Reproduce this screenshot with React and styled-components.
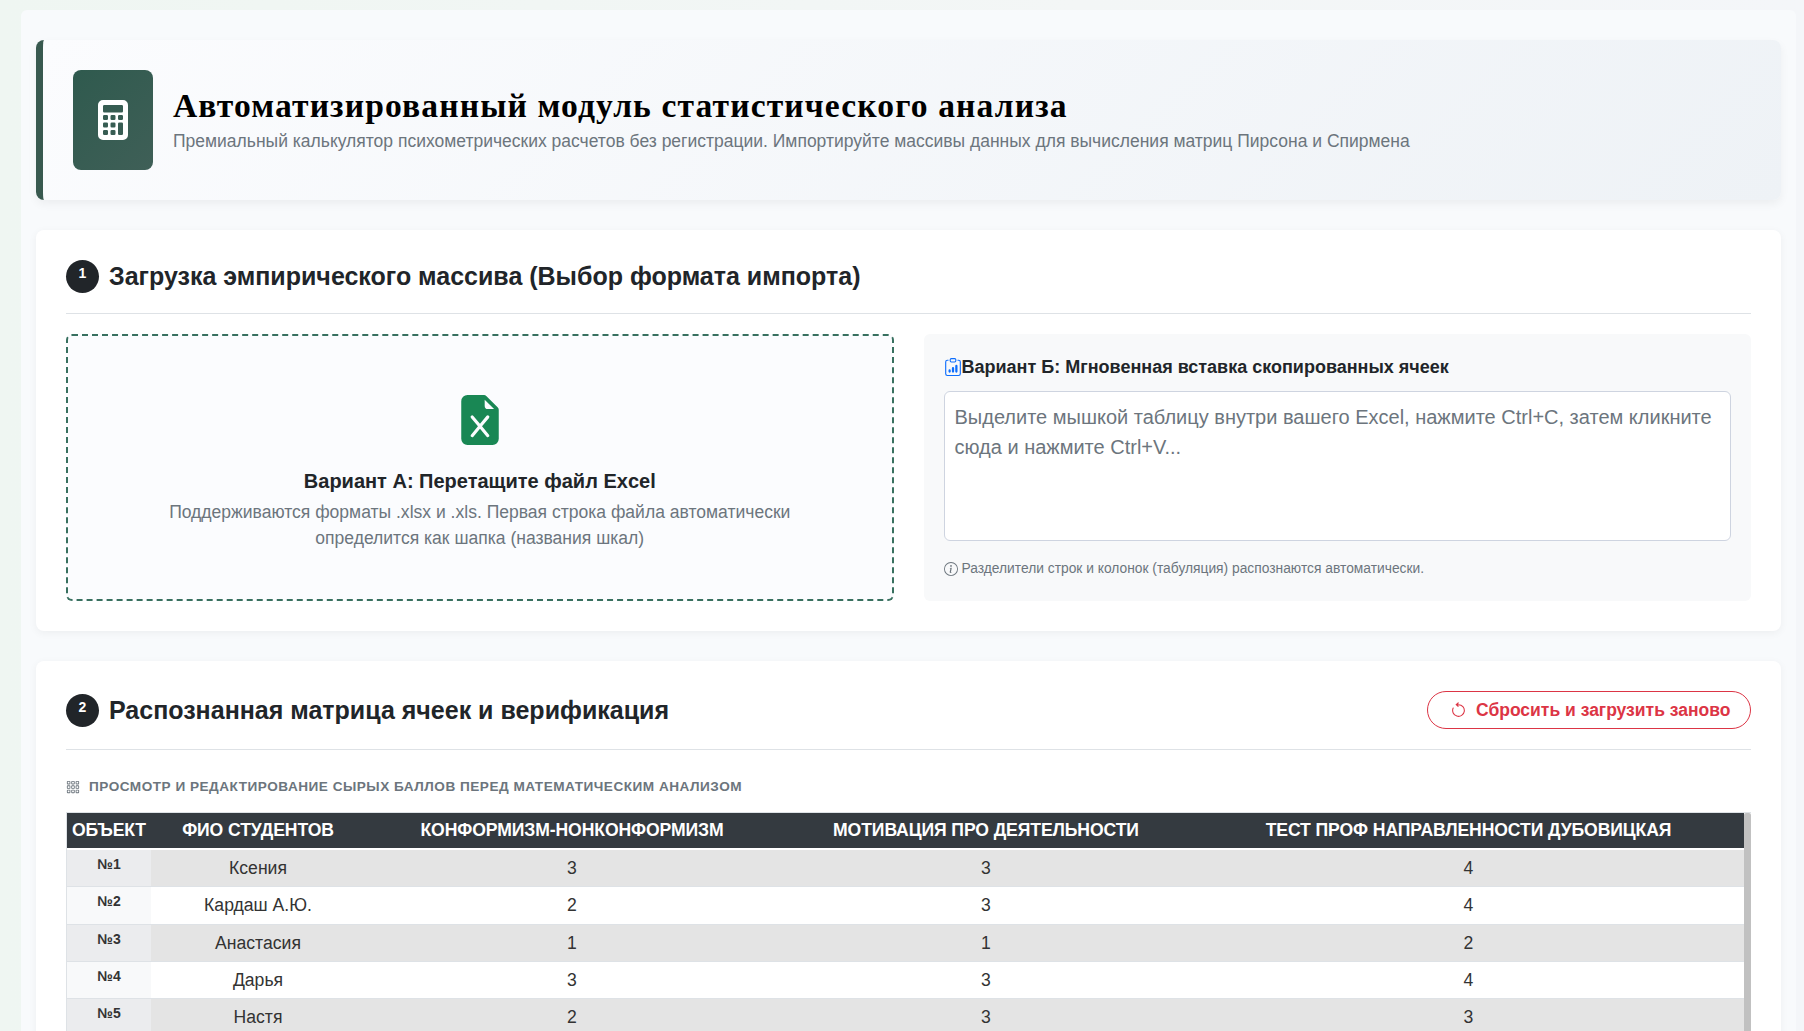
import React from 'react';
import styled, { createGlobalStyle } from 'styled-components';
import {
  BsCalculatorFill,
  BsFileEarmarkExcelFill,
  BsClipboardData,
  BsInfoCircle,
  BsArrowCounterclockwise,
  BsGrid3X3Gap,
} from 'react-icons/bs';

const rows = [
  ['Ксения', 3, 3, 4],
  ['Кардаш А.Ю.', 2, 3, 4],
  ['Анастасия', 1, 1, 2],
  ['Дарья', 3, 3, 4],
  ['Настя', 2, 3, 3],
];

const App = () => {
  return (
    <Page>
      <GlobalStyle />
      <Shell>
        <Hero>
          <HeroIcon><BsCalculatorFill size={40} /></HeroIcon>
          <div>
            <HeroTitle>Автоматизированный модуль статистического анализа</HeroTitle>
            <HeroText>
              Премиальный калькулятор психометрических расчетов без регистрации. Импортируйте массивы данных для вычисления матриц Пирсона и Спирмена
            </HeroText>
          </div>
        </Hero>

        <Card>
          <CardHead>
            <HeadTitle>
              <StepBadge>1</StepBadge>
              <CardTitle $raised>Загрузка эмпирического массива (Выбор формата импорта)</CardTitle>
            </HeadTitle>
          </CardHead>
          <ImportGrid>
            <DropZone>
              <BsFileEarmarkExcelFill size={50} color="#198754" />
              <DropTitle>Вариант А: Перетащите файл Excel</DropTitle>
              <DropText>
                Поддерживаются форматы .xlsx и .xls. Первая строка файла автоматически определится как шапка (названия шкал)
              </DropText>
            </DropZone>
            <PastePanel>
              <PasteTitle>
                <BsClipboardData size={18} color="#0d6efd" />
                Вариант Б: Мгновенная вставка скопированных ячеек
              </PasteTitle>
              <PasteArea
                readOnly
                placeholder="Выделите мышкой таблицу внутри вашего Excel, нажмите Ctrl+C, затем кликните сюда и нажмите Ctrl+V..."
              />
              <Hint>
                <BsInfoCircle size={14} />
                Разделители строк и колонок (табуляция) распознаются автоматически.
              </Hint>
            </PastePanel>
          </ImportGrid>
        </Card>

        <Card>
          <CardHead $compact>
            <HeadTitle>
              <StepBadge>2</StepBadge>
              <CardTitle>Распознанная матрица ячеек и верификация</CardTitle>
            </HeadTitle>
            <ResetButton>
              <BsArrowCounterclockwise size={17} />
              Сбросить и загрузить заново
            </ResetButton>
          </CardHead>
          <Caption>
            <BsGrid3X3Gap size={14} />
            Просмотр и редактирование сырых баллов перед математическим анализом
          </Caption>
          <TableFrame>
            <Table>
              <colgroup>
                <col width="84" />
                <col width="214" />
                <col width="414" />
                <col width="414" />
                <col width="551" />
              </colgroup>
              <thead>
                <tr>
                  <Th>Объект</Th>
                  <Th>ФИО студентов</Th>
                  <Th>Конформизм-нонконформизм</Th>
                  <Th>Мотивация про деятельности</Th>
                  <Th>Тест проф направленности Дубовицкая</Th>
                </tr>
              </thead>
              <tbody>
                {rows.map((row, i) => (
                  <Row key={i}>
                    <IndexCell>№{i + 1}</IndexCell>
                    {row.map((value, j) => (
                      <Cell key={j}>{value}</Cell>
                    ))}
                  </Row>
                ))}
              </tbody>
            </Table>
            <ScrollThumb />
          </TableFrame>
        </Card>
      </Shell>
    </Page>
  );
};

export default App;

const GlobalStyle = createGlobalStyle`
  html, body {
    margin: 0;
    height: 100%;
    overflow: hidden;
  }
  body {
    font-family: "Liberation Sans", Arial, sans-serif;
    color: #212529;
    background: linear-gradient(90deg, #eff6f2 0%, #f3f6f6 60%, #f4f6f9 100%);
  }
  * {
    box-sizing: border-box;
  }
`;

const Page = styled.div`
  padding: 10px 8px 0 21px;
`;

const Shell = styled.div`
  background: #f8fafc;
  border-radius: 6px;
  padding: 30px 15px;
  display: flex;
  flex-direction: column;
  gap: 30px;
`;

const Hero = styled.header`
  display: flex;
  align-items: center;
  gap: 20px;
  height: 160px;
  padding: 30px;
  border-left: 7px solid #38594f;
  border-radius: 8px;
  background: linear-gradient(135deg, #fbfcfe 0%, #eef2f6 100%);
  box-shadow: 0 4px 10px rgba(0, 0, 0, 0.05);
`;

const HeroIcon = styled.div`
  flex: none;
  width: 80px;
  height: 100px;
  display: flex;
  align-items: center;
  justify-content: center;
  border-radius: 8px;
  color: #fff;
  background: linear-gradient(135deg, #2f5a4e, #3f5f57);
`;

const HeroTitle = styled.h1`
  margin: 0 0 4px;
  font-family: "Liberation Serif", "Times New Roman", serif;
  font-size: 33.6px;
  line-height: 1.2;
  font-weight: 700;
  letter-spacing: 1.12px;
  color: #000;
`;

const HeroText = styled.p`
  margin: 0 0 2px;
  font-size: 17.5px;
  line-height: 1.2;
  color: #6c757d;
`;

const Card = styled.section`
  background: #fff;
  border-radius: 8px;
  padding: 30px;
  box-shadow: 0 2px 8px rgba(0, 0, 0, 0.05);
`;

const CardHead = styled.div`
  display: flex;
  align-items: center;
  justify-content: space-between;
  padding-bottom: 20px;
  margin-bottom: ${(p) => (p.$compact ? '27px' : '20px')};
  border-bottom: 1px solid #dee2e6;
`;

const HeadTitle = styled.div`
  display: flex;
  align-items: center;
  gap: 10px;
`;

const StepBadge = styled.span`
  flex: none;
  width: 33px;
  height: 33px;
  padding-top: 5px;
  border-radius: 50%;
  background: #212529;
  color: #fff;
  font-size: 14px;
  font-weight: 700;
  line-height: 16px;
  text-align: center;
`;

const CardTitle = styled.h2`
  margin: ${(p) => (p.$raised ? '-2px' : '0')} 0 0;
  font-size: 25px;
  line-height: 1.2;
  font-weight: 700;
  color: #212529;
`;

const ImportGrid = styled.div`
  display: grid;
  grid-template-columns: 1fr 1fr;
  gap: 30px;
`;

const DropZone = styled.div`
  height: 267px;
  display: flex;
  flex-direction: column;
  align-items: center;
  justify-content: center;
  padding: 11px 80px 0;
  border: 2px dashed #38705f;
  border-radius: 6px;
  background: #fbfcfe;
  text-align: center;
`;

const DropTitle = styled.div`
  margin: 21px 0 3px;
  font-size: 20px;
  line-height: 1.5;
  font-weight: 700;
  color: #212529;
`;

const DropText = styled.div`
  font-size: 17.55px;
  line-height: 1.5;
  color: #6c757d;
`;

const PastePanel = styled.div`
  height: 267px;
  padding: 20px;
  border-radius: 6px;
  background: #f8f9fa;
`;

const PasteTitle = styled.div`
  display: flex;
  align-items: center;
  margin: 1px 0 12px;
  font-size: 18px;
  line-height: 24px;
  font-weight: 700;
  color: #212529;
`;

const PasteArea = styled.textarea`
  display: block;
  width: 100%;
  height: 150px;
  padding: 10px;
  resize: none;
  border: 1px solid #ced4e0;
  border-radius: 6px;
  background: #fff;
  font-family: "Liberation Sans", Arial, sans-serif;
  font-size: 20px;
  line-height: 30px;
  outline: none;
  &::placeholder {
    color: #6c757d;
    opacity: 1;
  }
`;

const Hint = styled.div`
  display: flex;
  align-items: center;
  gap: 4px;
  margin-top: 19px;
  font-size: 13.8px;
  line-height: 18px;
  color: #6c757d;
`;

const ResetButton = styled.button`
  display: flex;
  align-items: center;
  gap: 9px;
  width: 324px;
  height: 38px;
  padding: 0 10px 0 22px;
  border: 1px solid #dc3545;
  border-radius: 19px;
  background: #fff;
  color: #dc3545;
  font-family: "Liberation Sans", Arial, sans-serif;
  font-size: 17.5px;
  font-weight: 700;
  white-space: nowrap;
`;

const Caption = styled.div`
  display: flex;
  align-items: center;
  gap: 9px;
  margin-bottom: 15px;
  font-size: 13.6px;
  line-height: 20px;
  font-weight: 700;
  letter-spacing: 0.5px;
  text-transform: uppercase;
  color: #6c757d;
`;

const TableFrame = styled.div`
  display: flex;
  align-items: stretch;
  border-top: 1px solid #dee2e6;
  border-left: 1px solid #dee2e6;
`;

const ScrollThumb = styled.div`
  flex: none;
  width: 7px;
  background: #c1c1c1;
  border-radius: 2px 2px 0 0;
`;

const Table = styled.table`
  flex: 1;
  min-width: 0;
  table-layout: fixed;
  border-collapse: collapse;
`;

const Th = styled.th`
  height: 36px;
  padding: 0;
  background: #343a40;
  border-bottom: 2px solid #fff;
  color: #fff;
  font-size: 17.6px;
  font-weight: 700;
  letter-spacing: -0.1px;
  text-transform: uppercase;
  text-align: center;
  white-space: nowrap;
`;

const Row = styled.tr`
  background: #fff;
  &:nth-child(odd) {
    background: #e4e4e4;
  }
  &:nth-child(odd) td:first-child {
    background: #ebecee;
  }
`;

const Cell = styled.td`
  padding: 6px 0;
  border-bottom: 1px solid #dee2e6;
  font-size: 17.6px;
  line-height: 24.3px;
  text-align: center;
  color: #333;
`;

const IndexCell = styled.td`
  padding: 5px 0;
  border-bottom: 1px solid #dee2e6;
  background: #f8f9fa;
  font-size: 14px;
  line-height: 18px;
  font-weight: 700;
  text-align: center;
  vertical-align: top;
  color: #333;
`;
